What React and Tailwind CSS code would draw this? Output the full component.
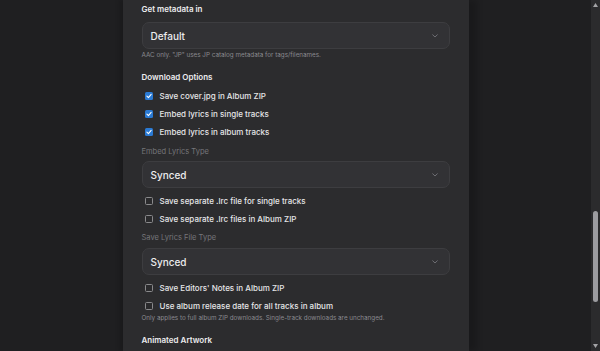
import React from "react";

const Check = ({ checked, label }) => (
  <div className="flex items-center h-[18px]">
    {checked ? (
      <div className="ml-[3px] w-[8px] h-[8px] rounded-[1.5px] bg-[#2a7ad4] flex items-center justify-center">
        <svg width="6" height="6" viewBox="0 0 10 10" fill="none">
          <path d="M1.5 5.2 L4 7.6 L8.6 2.4" stroke="white" strokeWidth="1.8" strokeLinecap="round" strokeLinejoin="round" />
        </svg>
      </div>
    ) : (
      <div className="ml-[3px] w-[8px] h-[8px] rounded-[1.5px] border border-[#8a8a8c] bg-[#2a2a2c]" />
    )}
    <span className="ml-[7px] text-[8px] leading-[10px] font-medium text-[#e6e6e8]">{label}</span>
  </div>
);

const Select = ({ value }) => (
  <div className="h-[27px] rounded-[7px] border border-[#3d3d40] bg-[#323235] flex items-center justify-between pl-[8px] pr-[11px]">
    <span className="text-[10px] leading-[12px] font-medium text-[#ececee]">{value}</span>
    <svg width="6" height="4" viewBox="0 0 6 4" fill="none">
      <path d="M0.7 0.8 L3 3 L5.3 0.8" stroke="#75757a" strokeWidth="0.9" strokeLinecap="round" />
    </svg>
  </div>
);

const Heading = ({ children, className = "" }) => (
  <div className={"text-[8px] leading-[10px] font-semibold text-[#ececee] " + className}>{children}</div>
);

const Label = ({ children, className = "" }) => (
  <div className={"text-[7.5px] leading-[10px] text-[#76767a] " + className}>{children}</div>
);

const Help = ({ children, className = "" }) => (
  <div className={"text-[6.3px] leading-[8px] text-[#8a8a8e] " + className}>{children}</div>
);

export default function App() {
  return (
    <div
      className="w-[600px] h-[351px] overflow-hidden flex bg-[#1f1f21]"
      style={{ fontFamily: "Inter, 'Noto Sans', sans-serif" }}
    >
      <div className="flex-1 flex justify-center">
        <div className="w-[346px] h-full bg-[#2c2c2e] px-[19px] pt-[4px] shadow-[8px_0_6px_rgba(0,0,0,0.18),-4px_0_4px_rgba(0,0,0,0.15)] flex flex-col">
          <Heading>Get metadata in</Heading>
          <div className="mt-[8px]">
            <Select value="Default" />
          </div>
          <Help className="mt-[2px]">AAC only. "JP" uses JP catalog metadata for tags/filenames.</Help>
          <Heading className="mt-[13px]">Download Options</Heading>
          <div className="mt-[5px] flex flex-col">
            <Check checked label="Save cover.jpg in Album ZIP" />
            <Check checked label="Embed lyrics in single tracks" />
            <Check checked label="Embed lyrics in album tracks" />
          </div>
          <Label className="mt-[6px]">Embed Lyrics Type</Label>
          <div className="mt-[4px]">
            <Select value="Synced" />
          </div>
          <div className="mt-[4px] flex flex-col">
            <Check label="Save separate .lrc file for single tracks" />
            <Check label="Save separate .lrc files in Album ZIP" />
          </div>
          <Label className="mt-[5px]">Save Lyrics File Type</Label>
          <div className="mt-[5px]">
            <Select value="Synced" />
          </div>
          <div className="mt-[4px] flex flex-col">
            <Check label="Save Editors' Notes in Album ZIP" />
            <Check label="Use album release date for all tracks in album" />
          </div>
          <Help className="mt-[-1px]">Only applies to full album ZIP downloads. Single-track downloads are unchanged.</Help>
          <Heading className="mt-[13px]">Animated Artwork</Heading>
        </div>
      </div>
      <div className="w-[9px] h-full bg-[#2b2b2d] flex flex-col items-center justify-between py-[3px]">
        <svg width="5" height="4" viewBox="0 0 5 4"><path d="M2.5 0 L5 4 L0 4 Z" fill="#a3a3a6" /></svg>
        <div className="flex-1 w-full flex flex-col items-center">
          <div className="mt-[204px] w-[5px] h-[91px] rounded-full bg-[#9c9ca0]" />
        </div>
        <svg width="5" height="4" viewBox="0 0 5 4"><path d="M0 0 L5 0 L2.5 4 Z" fill="#a3a3a6" /></svg>
      </div>
    </div>
  );
}
